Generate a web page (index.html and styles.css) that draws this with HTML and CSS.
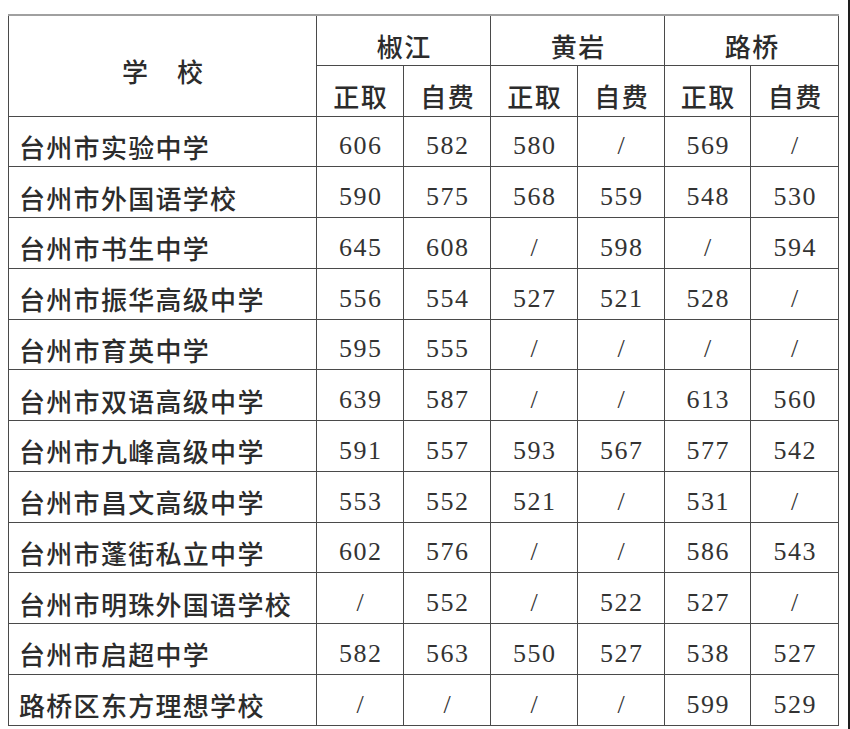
FILE: index.html
```html
<!DOCTYPE html>
<html lang="zh-CN">
<head>
<meta charset="utf-8">
<title>分数线</title>
<link rel="stylesheet" href="styles.css">
</head>
<body>
<div class="page">
<table class="score">
  <colgroup>
    <col class="c-school"><col class="c-num"><col class="c-num"><col class="c-num"><col class="c-num"><col class="c-num2"><col class="c-num3">
  </colgroup>
  <thead>
    <tr class="h1">
      <th rowspan="2" class="school-h">学　校</th>
      <th colspan="2">椒江</th>
      <th colspan="2">黄岩</th>
      <th colspan="2">路桥</th>
    </tr>
    <tr class="h2">
      <th>正取</th><th>自费</th><th>正取</th><th>自费</th><th>正取</th><th>自费</th>
    </tr>
  </thead>
  <tbody>
    <tr><td class="name">台州市实验中学</td><td>606</td><td>582</td><td>580</td><td>/</td><td>569</td><td>/</td></tr>
    <tr><td class="name">台州市外国语学校</td><td>590</td><td>575</td><td>568</td><td>559</td><td>548</td><td>530</td></tr>
    <tr><td class="name">台州市书生中学</td><td>645</td><td>608</td><td>/</td><td>598</td><td>/</td><td>594</td></tr>
    <tr><td class="name">台州市振华高级中学</td><td>556</td><td>554</td><td>527</td><td>521</td><td>528</td><td>/</td></tr>
    <tr><td class="name">台州市育英中学</td><td>595</td><td>555</td><td>/</td><td>/</td><td>/</td><td>/</td></tr>
    <tr><td class="name">台州市双语高级中学</td><td>639</td><td>587</td><td>/</td><td>/</td><td>613</td><td>560</td></tr>
    <tr><td class="name">台州市九峰高级中学</td><td>591</td><td>557</td><td>593</td><td>567</td><td>577</td><td>542</td></tr>
    <tr><td class="name">台州市昌文高级中学</td><td>553</td><td>552</td><td>521</td><td>/</td><td>531</td><td>/</td></tr>
    <tr><td class="name">台州市蓬街私立中学</td><td>602</td><td>576</td><td>/</td><td>/</td><td>586</td><td>543</td></tr>
    <tr><td class="name">台州市明珠外国语学校</td><td>/</td><td>552</td><td>/</td><td>522</td><td>527</td><td>/</td></tr>
    <tr><td class="name">台州市启超中学</td><td>582</td><td>563</td><td>550</td><td>527</td><td>538</td><td>527</td></tr>
    <tr><td class="name">路桥区东方理想学校</td><td>/</td><td>/</td><td>/</td><td>/</td><td>599</td><td>529</td></tr>
  </tbody>
</table>
</div>
</body>
</html>
```

FILE: styles.css
```css
html, body {
  margin: 0;
  padding: 0;
  background: #ffffff;
}

.page {
  width: 850px;
  min-height: 729px;
  box-sizing: border-box;
  border-right: 2px solid #1e1e1e;
  padding-top: 14px;
  padding-left: 8px;
}

.score {
  border-collapse: collapse;
  table-layout: fixed;
  width: 830px;
  color: #2c2c2c;
}

.c-school { width: 308px; }
.c-num { width: 87px; }
.c-num2 { width: 86px; }
.c-num3 { width: 88px; }

.score th,
.score td {
  border: 1px solid #4a4a4a;
  padding: 10px 0 0 0;
  vertical-align: middle;
  text-align: center;
  white-space: nowrap;
}

.score thead tr:first-child th {
  border-top: 2px solid #a0a0a0;
}

.score th {
  font-family: "Noto Sans CJK SC", "Noto Sans", sans-serif;
  font-weight: 500;
  font-size: 26px;
  letter-spacing: 1.5px;
  text-indent: 1.5px;
}

.h1 { height: 50px; }
.h2 { height: 51px; }

.score tbody tr { height: 50.75px; }

.score td {
  font-family: "Liberation Serif", "Times New Roman", serif;
  font-size: 26px;
  letter-spacing: 1.5px;
  text-indent: 1.5px;
  color: #333333;
}

.score td.name {
  font-family: "Noto Sans CJK SC", "Noto Sans", sans-serif;
  font-weight: 500;
  text-align: left;
  padding-left: 10px;
  letter-spacing: 1.3px;
  text-indent: 0;
  color: #2c2c2c;
}
```
